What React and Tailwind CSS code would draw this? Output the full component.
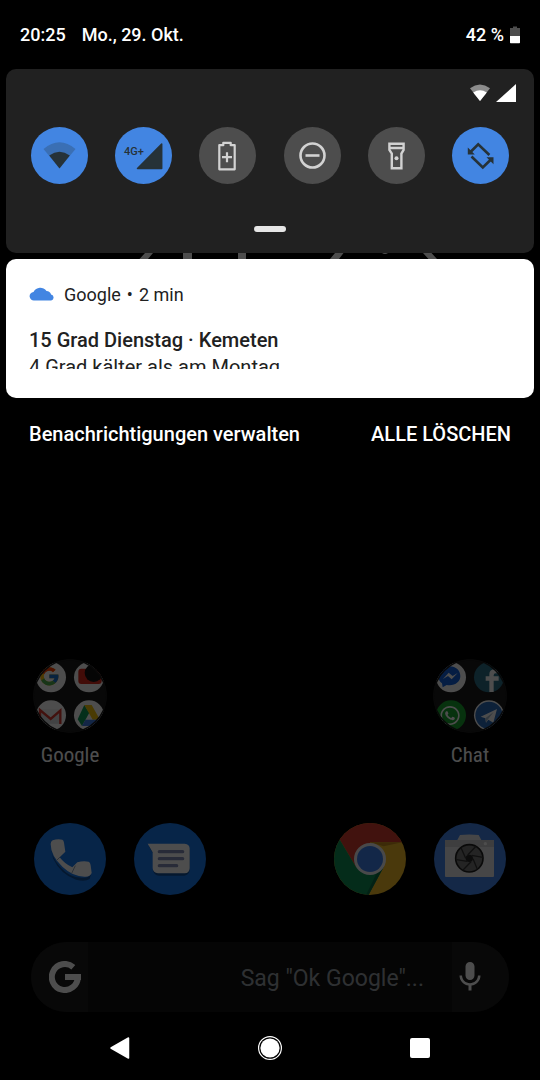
import React from 'react';
import { FcGoogle } from 'react-icons/fc';
import { FaWhatsapp } from 'react-icons/fa';
import { MdMic } from 'react-icons/md';

const StatusBar = () => (
  <header className="flex h-[69px] items-center justify-between px-5 text-lg font-medium">
    <div className="flex gap-4">
      <time>20:25</time>
      <span>Mo., 29. Okt.</span>
    </div>
    <div className="flex items-center gap-1.5">
      <span>42 %</span>
      <svg width="10" height="18" viewBox="0 0 10 18">
        <path d="M0 2h3V0.5h4V2h3v8H0z" fill="#4d4d4d" />
        <path d="M0 10h10v6.500a.7.7 0 0 1-.7.7H.7a.7.7 0 0 1-.7-.7z" fill="#fff" />
      </svg>
    </div>
  </header>
);

const WifiTileIcon = () => (
  <>
    <path d="M12.500 22Q28.500 8.500 44.500 22L28.500 41.200z" fill="#3a6fb4" />
    <path d="M18.200 28.400Q28.500 21.200 38.800 28.400L28.500 41.500z" fill="#263238" />
  </>
);

const MobileDataIcon = () => (
  <>
    <text x="9" y="28" fontSize="11" fontWeight="500" fill="#263238">4G+</text>
    <path d="M22.500 41.500L46.700 17V41.500z" fill="#263238" stroke="#263238" strokeWidth="1.500" strokeLinejoin="round" />
  </>
);

const BatterySaverIcon = () => (
  <g fill="none" stroke="#d2d2d2" strokeWidth="2.200" strokeLinejoin="round">
    <path d="M20.300 18.200H24.300V15.800H31.700V18.200H35.700V42.300H20.300z" />
    <path d="M28 25.200v10M23 30.200h10" />
  </g>
);

const DoNotDisturbIcon = () => (
  <g fill="none" stroke="#d2d2d2" strokeWidth="2.600">
    <circle cx="28.500" cy="28.500" r="12" />
    <path d="M21.500 28.500h14" />
  </g>
);

const FlashlightIcon = () => (
  <>
    <path
      d="M21.400 16.700H35.600V23L33.400 26.500V41.300H23.800V26.500L21.400 23zM21.400 21H35.600"
      fill="none"
      stroke="#d2d2d2"
      strokeWidth="2.400"
    />
    <circle cx="28.500" cy="31.200" r="2" fill="#d2d2d2" />
  </>
);

const RotateIcon = () => (
  <>
    <path
      d="M18.500 25L26.200 17.300L37.400 28M19.500 29.500L30.800 40.400L39.200 32.200"
      fill="none"
      stroke="#263238"
      strokeWidth="2.600"
    />
    <path d="M15.800 20.500V27.500H22.800zM41.500 30.200V37.200L34.500 30.200z" fill="#263238" />
  </>
);

const tiles = [
  { label: 'WLAN', Icon: WifiTileIcon, on: true },
  { label: 'Mobile Daten', Icon: MobileDataIcon, on: true },
  { label: 'Energiesparmodus', Icon: BatterySaverIcon, on: false },
  { label: 'Bitte nicht stören', Icon: DoNotDisturbIcon, on: false },
  { label: 'Taschenlampe', Icon: FlashlightIcon, on: false },
  { label: 'Automatisch drehen', Icon: RotateIcon, on: true },
];

const QuickSettings = () => (
  <section className="mx-1.5 rounded-[10px] bg-[#212121] pb-[21px]">
    <div className="flex h-12 items-center justify-end gap-1.5 px-[18px]">
      <svg width="20" height="18" viewBox="0 0 20 18">
        <path d="M0 4.200Q10-3.200 20 4.200L10 17z" fill="#8c8c8c" />
        <path d="M3.200 8.500Q10 3.800 16.800 8.500L10 17z" fill="#fff" />
      </svg>
      <svg width="20" height="18" viewBox="0 0 20 18">
        <path d="M0 18L20 0V18z" fill="#fff" />
      </svg>
    </div>
    <div className="mt-2.5 flex justify-between px-[25px]">
      {tiles.map(({ label, Icon, on }) => (
        <button
          key={label}
          type="button"
          aria-label={label}
          aria-pressed={on}
          className={`size-[57px] rounded-full ${on ? 'bg-[#4285e2]' : 'bg-[#4d4d4d]'}`}
        >
          <svg viewBox="0 0 57 57" className="size-full">
            <Icon />
          </svg>
        </button>
      ))}
    </div>
    <div className="mx-auto mt-[42px] h-1.5 w-8 rounded-full bg-[#e6e6e6]" />
  </section>
);

// Sliver of the wallpaper clock visible between the panel and the card
const ClockSliver = () => (
  <svg viewBox="0 0 540 6" className="h-1.5 w-full" fill="#4d4d4d">
    <path d="M145 0h8l-5 6h-8.500zM183 0h9v6h-9zM238 0h8v6h-8z" />
    <path d="M335 0h8.500l-4.500 6h-9zM382 0h6q-3 2-6 0zM423 0h8.500l5.500 6h-8.500z" />
  </svg>
);

const Notification = () => (
  <article className="mx-1.5 rounded-[10px] bg-white px-[23px] pt-6 pb-[29px] text-[#212121]">
    <div className="flex h-6 items-center gap-2.5 text-lg">
      <svg width="25" height="18" viewBox="0 0 25 18" fill="#4285e2">
        <path d="M5.200 14.500A4.200 4.200 0 0 1 4.500 6A7.600 7.600 0 0 1 17.500 5.100A5 5 0 0 1 22.100 8.600A3 3 0 0 1 22.200 14.500z" />
      </svg>
      <div className="flex gap-1.5">
        <span>Google</span>
        <span>•</span>
        <span>2 min</span>
      </div>
    </div>
    <h2 className="mt-[19px] text-xl leading-7 font-medium">15 Grad Dienstag · Kemeten</h2>
    <p className="h-[15px] overflow-hidden text-xl leading-[26px]">4 Grad kälter als am Montag</p>
  </article>
);

const ShadeActions = () => (
  <div className="flex h-18 items-center justify-between px-[29px] text-xl font-medium">
    <button type="button">Benachrichtigungen verwalten</button>
    <button type="button">ALLE LÖSCHEN</button>
  </div>
);

const GoogleApps = () => (
  <>
    <circle cx="93" cy="82" r="45" fill="#fff" />
    <FcGoogle x="55" y="46" size={66} />
    <circle cx="207" cy="82" r="45" fill="#fff" />
    <rect x="175" y="56" width="70" height="46" rx="9" fill="#d9291c" />
    <circle cx="221" cy="69" r="27" fill="#111" />
    <circle cx="93" cy="196" r="45" fill="#fff" />
    <path d="M60 177h63v44H60z" fill="#d9dde2" />
    <path d="M60 177l32 27 31-27" fill="#f4f4f4" />
    <path d="M60 221v-41l32 27 29-25v40" fill="none" stroke="#d93a2f" strokeWidth="7" />
    <circle cx="207" cy="196" r="45" fill="#fff" />
    <path d="M193 165L173 208L186 228L208 188z" fill="#0f9d58" />
    <path d="M193 165H215L240 209H218z" fill="#f4c20d" />
    <path d="M196 209H240L230 228H186z" fill="#3f7de8" />
  </>
);

const ChatApps = () => (
  <>
    <circle cx="93" cy="82" r="45" fill="#fff" />
    <path d="M89 49c-20 0-34 13-34 29 0 9 4 17 11 22l2 12 12-7c24 4 41-9 41-27 0-16-13-29-32-29z" fill="#1262dd" />
    <path d="M69 87l17-19 12 10 15-9-18 19-11-10z" fill="#fff" />
    <circle cx="207" cy="82" r="45" fill="#2b7088" />
    <path d="M208 126V92h-11V79h11V72q0-14 17-14h10v12h-8q-6 0-6 6v3h15v13h-15v34z" fill="#fff" />
    <circle cx="93" cy="196" r="45" fill="#19a52f" />
    <FaWhatsapp x="57" y="164" size={66} color="#fff" />
    <circle cx="207" cy="196" r="45" fill="#fff" />
    <circle cx="207" cy="196" r="41" fill="#2d6dbd" />
    <path d="M182 200L231 177L220 218L205 209L198 218L196 205z" fill="#fff" />
    <path d="M196 205L221 186L204 208L198 218z" fill="#aabdd0" />
  </>
);

const Folder = ({ name, children }) => {
  const clipId = `folder-${name}`;
  return (
    <button type="button" className="flex w-25 flex-col items-center gap-2">
      <svg viewBox="39 27 222 222" className="size-[74px]">
        <clipPath id={clipId}>
          <circle cx="150" cy="138" r="111" />
        </clipPath>
        <g clipPath={`url(#${clipId})`}>
          <circle cx="150" cy="138" r="111" fill="#1b1b1b" />
          {children}
          <circle cx="150" cy="138" r="109" fill="none" stroke="#1b1b1b" strokeWidth="5" />
        </g>
      </svg>
      <span className="font-['Roboto_Condensed','Liberation_Sans_Narrow','Roboto',sans-serif] text-[21px] leading-7">
        {name}
      </span>
    </button>
  );
};

const PhoneIcon = () => (
  <svg viewBox="42 39 216 216" className="size-18">
    <circle cx="150" cy="147" r="108" fill="#1a7aee" />
    <path d="M93 112Q94 142 120 170Q150 205 190 203Q208 203 213 192L209 207Q195 216 168 209Q122 194 99 145z" fill="#125099" />
    <path d="M98 91Q112 86 127 89Q131 91 132 98L136 125L119 142Q134 162 157 172L172 157Q190 151 206 155Q212 158 213 174L215 189Q211 200 196 200Q160 201 128 171Q92 137 92 102Q92 94 98 91z" fill="#fff" />
    <path d="M110 151L122 139M155 190L166 167" stroke="#9aa8ba" strokeWidth="3" />
  </svg>
);

const MessagesIcon = () => (
  <svg viewBox="342 39 216 216" className="size-18">
    <circle cx="450" cy="147" r="108" fill="#1a7aee" />
    <path d="M386 108L399 130V180Q401 196 417 197H493Q507 196 509 181V118L450 115z" fill="#125099" />
    <path d="M383 101H494Q509 102 509 116V175Q508 190 494 190H414Q399 189 398 175V127z" fill="#fff" />
    <path d="M418 125H488M418 146H488M418 167H470" stroke="#8590b8" strokeWidth="10" strokeLinecap="round" />
  </svg>
);

const ChromeIcon = () => (
  <svg viewBox="42 39 216 216" className="size-18">
    <clipPath id="chrome-disc">
      <circle cx="150" cy="147" r="108" />
    </clipPath>
    <g clipPath="url(#chrome-disc)">
      <path d="M40 37H260V257H40z" fill="#f4bd28" />
      <path d="M30 30H270V97H150V147L108 171L60 90z" fill="#d63c2e" />
      <path d="M30 90H60L108 171L150 147L191 171L143 260H30z" fill="#0f9356" />
      <path d="M150 97H247L191 109z" fill="#c68a1d" />
      <path d="M191 171L143 260L138 255L170 190z" fill="#0b6f45" />
    </g>
    <circle cx="150" cy="147" r="48" fill="#f1f1f4" />
    <circle cx="150" cy="147" r="39" fill="#3f82ee" />
  </svg>
);

const CameraIcon = () => (
  <svg viewBox="342 39 216 216" className="size-18">
    <circle cx="450" cy="147" r="108" fill="#4386ec" />
    <path d="M378 90H412L420 75Q448 72 476 75L484 90H519Q522 90 522 93V198Q522 201 519 201H378Q375 201 375 198V93Q375 90 378 90z" fill="#e8e8ea" />
    <path d="M375 93Q375 90 378 90H519Q522 90 522 93V111H375z" fill="#cccccf" />
    <circle cx="496" cy="101" r="5" fill="#fff" />
    <circle cx="448" cy="145" r="41" fill="#777" stroke="#202020" strokeWidth="5" />
    <circle cx="448" cy="145" r="11" fill="#2a2a2a" />
    <path
      d="M437 145L423 113M443 135L468 109M455 136L489 142M459 146L472 178M453 155L427 182M442 154L409 149"
      stroke="#363636"
      strokeWidth="4"
    />
  </svg>
);

const dock = [
  { label: 'Telefon', Icon: PhoneIcon },
  { label: 'Messages', Icon: MessagesIcon },
  null,
  { label: 'Chrome', Icon: ChromeIcon },
  { label: 'Kamera', Icon: CameraIcon },
];

const SearchBar = () => (
  <form className="mx-[31px] flex h-[70px] overflow-hidden rounded-full bg-[#111]">
    <div className="flex w-[57px] items-center bg-[#1b1b1b] pl-[18px]">
      <svg width="32" height="32" viewBox="88 93 96 96" fill="none" stroke="#fff" strokeWidth="18">
        <path d="M161 111.500A39 39 0 1 0 174.500 141M136 141H184" />
      </svg>
    </div>
    <input
      type="text"
      aria-label="Suche"
      placeholder={'Sag "Ok Google"...'}
      className="min-w-0 flex-1 bg-transparent pt-1 pr-7 text-right text-[23px] outline-none placeholder:text-[#9aa0a6]"
    />
    <button type="button" aria-label="Sprachsuche" className="flex w-[57px] items-center bg-[#1b1b1b]">
      <MdMic size={36} />
    </button>
  </form>
);

const HomeScreen = () => (
  <main className="mt-auto opacity-30">
    <div className="flex justify-between px-5">
      <Folder name="Google">
        <GoogleApps />
      </Folder>
      <Folder name="Chat">
        <ChatApps />
      </Folder>
    </div>
    <div className="mt-[54px] grid grid-cols-5 justify-items-center px-5">
      {dock.map((app, i) =>
        app ? (
          <button key={app.label} type="button" aria-label={app.label}>
            <app.Icon />
          </button>
        ) : (
          <span key={i} />
        )
      )}
    </div>
    <div className="mt-[47px]">
      <SearchBar />
    </div>
  </main>
);

const NavBar = () => (
  <nav className="mt-1 grid h-16 grid-cols-3 items-center px-[45px]">
    <button type="button" aria-label="Zurück" className="flex justify-center">
      <svg width="20" height="24" viewBox="0 0 20 24">
        <path d="M1 12L18.500 2V22z" fill="#fff" stroke="#fff" strokeWidth="1.500" strokeLinejoin="round" />
      </svg>
    </button>
    <button type="button" aria-label="Startbildschirm" className="flex justify-center">
      <svg width="24" height="24" viewBox="0 0 24 24">
        <circle cx="12" cy="12" r="11.400" fill="none" stroke="#fff" strokeWidth="1.200" />
        <circle cx="12" cy="12" r="9.600" fill="#fff" />
      </svg>
    </button>
    <button type="button" aria-label="Letzte Apps" className="flex justify-center">
      <span className="size-5 rounded-[2px] bg-white" />
    </button>
  </nav>
);

const App = () => (
  <div className="flex min-h-screen flex-col bg-black font-['Roboto',sans-serif] text-white">
    <StatusBar />
    <QuickSettings />
    <ClockSliver />
    <Notification />
    <ShadeActions />
    <HomeScreen />
    <NavBar />
  </div>
);

export default App;
